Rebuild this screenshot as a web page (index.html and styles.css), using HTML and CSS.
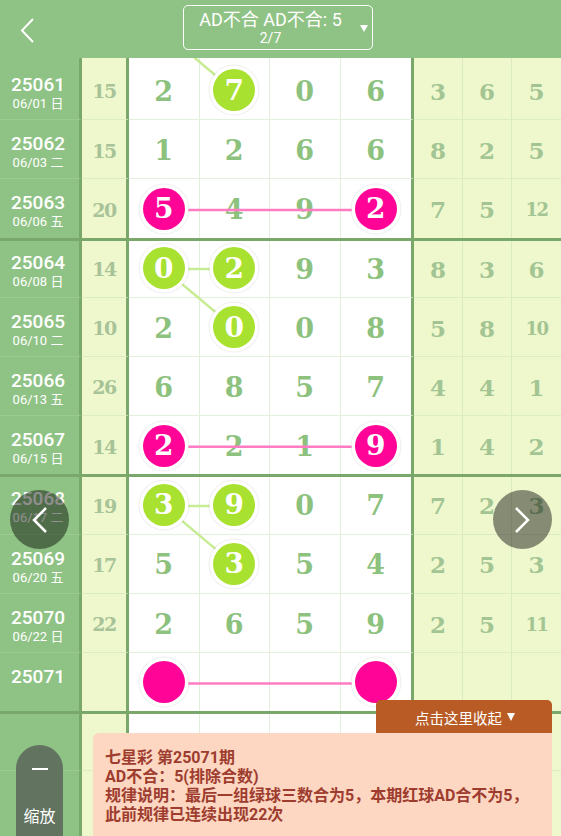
FILE: index.html
```html
<!DOCTYPE html>
<html>
<head>
<meta charset="utf-8">
<link rel="stylesheet" href="styles.css">
</head>
<body>
<div class="page">
  <div class="header">
    <svg class="back" width="16" height="26" viewBox="0 0 16 26"><polyline points="13,2 2,13.5 13,25" fill="none" stroke="#fff" stroke-width="2"/></svg>
    <div class="dropdown">
      <div class="dd-text">
        <div class="dd-title">AD不合 AD不合: 5</div>
        <div class="dd-sub">2/7</div>
      </div>
      <span class="dd-tri"></span>
    </div>
    <div></div>
  </div>

  <svg class="links" width="561" height="836" viewBox="0 0 561 836">
    <g stroke="#c7ec94" stroke-width="2.5">
      <line x1="164.25" y1="32.3" x2="234.75" y2="91.5"/>
      <line x1="164.25" y1="269.1" x2="234.75" y2="269.1"/>
      <line x1="164.25" y1="269.1" x2="234.75" y2="328.3"/>
      <line x1="164.25" y1="505.9" x2="234.75" y2="505.9"/>
      <line x1="164.25" y1="505.9" x2="234.75" y2="565.1"/>
    </g>
    <g stroke="#ff7cc3" stroke-width="2.5">
      <line x1="164.25" y1="209.9" x2="375.75" y2="209.9"/>
      <line x1="164.25" y1="446.7" x2="375.75" y2="446.7"/>
      <line x1="164.25" y1="683.5" x2="375.75" y2="683.5"/>
    </g>
  </svg>

  <div class="table">
    <div class="row first">
      <div class="c-id"><div class="id">25061</div><div class="date">06/01 日</div></div>
      <div class="c-sum">15</div>
      <div class="c-n">2</div><div class="c-n"><span class="ball g">7</span></div><div class="c-n">0</div><div class="c-n last">6</div>
      <div class="c-r">3</div><div class="c-r">6</div><div class="c-r">5</div>
    </div>
    <div class="row">
      <div class="c-id"><div class="id">25062</div><div class="date">06/03 二</div></div>
      <div class="c-sum">15</div>
      <div class="c-n">1</div><div class="c-n">2</div><div class="c-n">6</div><div class="c-n last">6</div>
      <div class="c-r">8</div><div class="c-r">2</div><div class="c-r">5</div>
    </div>
    <div class="row">
      <div class="c-id"><div class="id">25063</div><div class="date">06/06 五</div></div>
      <div class="c-sum">20</div>
      <div class="c-n"><span class="ball p">5</span></div><div class="c-n">4</div><div class="c-n">9</div><div class="c-n last"><span class="ball p">2</span></div>
      <div class="c-r">7</div><div class="c-r">5</div><div class="c-r two">12</div>
    </div>
    <div class="row grp">
      <div class="c-id"><div class="id">25064</div><div class="date">06/08 日</div></div>
      <div class="c-sum">14</div>
      <div class="c-n"><span class="ball g">0</span></div><div class="c-n"><span class="ball g">2</span></div><div class="c-n">9</div><div class="c-n last">3</div>
      <div class="c-r">8</div><div class="c-r">3</div><div class="c-r">6</div>
    </div>
    <div class="row">
      <div class="c-id"><div class="id">25065</div><div class="date">06/10 二</div></div>
      <div class="c-sum">10</div>
      <div class="c-n">2</div><div class="c-n"><span class="ball g">0</span></div><div class="c-n">0</div><div class="c-n last">8</div>
      <div class="c-r">5</div><div class="c-r">8</div><div class="c-r two">10</div>
    </div>
    <div class="row">
      <div class="c-id"><div class="id">25066</div><div class="date">06/13 五</div></div>
      <div class="c-sum">26</div>
      <div class="c-n">6</div><div class="c-n">8</div><div class="c-n">5</div><div class="c-n last">7</div>
      <div class="c-r">4</div><div class="c-r">4</div><div class="c-r">1</div>
    </div>
    <div class="row">
      <div class="c-id"><div class="id">25067</div><div class="date">06/15 日</div></div>
      <div class="c-sum">14</div>
      <div class="c-n"><span class="ball p">2</span></div><div class="c-n">2</div><div class="c-n">1</div><div class="c-n last"><span class="ball p">9</span></div>
      <div class="c-r">1</div><div class="c-r">4</div><div class="c-r">2</div>
    </div>
    <div class="row grp">
      <div class="c-id"><div class="id">25068</div><div class="date">06/17 二</div></div>
      <div class="c-sum">19</div>
      <div class="c-n"><span class="ball g">3</span></div><div class="c-n"><span class="ball g">9</span></div><div class="c-n">0</div><div class="c-n last">7</div>
      <div class="c-r">7</div><div class="c-r">2</div><div class="c-r">3</div>
    </div>
    <div class="row">
      <div class="c-id"><div class="id">25069</div><div class="date">06/20 五</div></div>
      <div class="c-sum">17</div>
      <div class="c-n">5</div><div class="c-n"><span class="ball g">3</span></div><div class="c-n">5</div><div class="c-n last">4</div>
      <div class="c-r">2</div><div class="c-r">5</div><div class="c-r">3</div>
    </div>
    <div class="row">
      <div class="c-id"><div class="id">25070</div><div class="date">06/22 日</div></div>
      <div class="c-sum">22</div>
      <div class="c-n">2</div><div class="c-n">6</div><div class="c-n">5</div><div class="c-n last">9</div>
      <div class="c-r">2</div><div class="c-r">5</div><div class="c-r two">11</div>
    </div>
    <div class="row">
      <div class="c-id"><div class="id">25071</div></div>
      <div class="c-sum"></div>
      <div class="c-n"><span class="ball p"></span></div><div class="c-n"></div><div class="c-n"></div><div class="c-n last"><span class="ball p"></span></div>
      <div class="c-r"></div><div class="c-r"></div><div class="c-r"></div>
    </div>
    <div class="row grp">
      <div class="c-id"></div><div class="c-sum"></div>
      <div class="c-n"></div><div class="c-n"></div><div class="c-n"></div><div class="c-n last"></div>
      <div class="c-r"></div><div class="c-r"></div><div class="c-r"></div>
    </div>
    <div class="row tail">
      <div class="c-id"></div><div class="c-sum"></div>
      <div class="c-n"></div><div class="c-n"></div><div class="c-n"></div><div class="c-n last"></div>
      <div class="c-r"></div><div class="c-r"></div><div class="c-r"></div>
    </div>
  </div>

  <div class="nav nav-left">
    <svg width="59" height="59" viewBox="0 0 59 59"><polyline points="36,18 24,30 36,42" fill="none" stroke="#fff" stroke-width="2.5"/></svg>
  </div>
  <div class="nav nav-right">
    <svg width="59" height="59" viewBox="0 0 59 59"><polyline points="23,18 35,30 23,42" fill="none" stroke="#fff" stroke-width="2.5"/></svg>
  </div>

  <div class="zoom-btn">
    <span class="zoom-bar"></span>
    <span class="zoom-text">缩放</span>
  </div>

  <div class="tab">点击这里收起 <span class="tab-tri"></span></div>
  <div class="popup">
    <div>七星彩 第25071期</div>
    <div>AD不合：5(排除合数)</div>
    <div>规律说明：最后一组绿球三数合为5，本期红球AD合不为5，此前规律已连续出现22次</div>
  </div>
</div>
</body>
</html>
```

FILE: styles.css
```css
* { box-sizing: border-box; }
html, body { margin: 0; padding: 0; }
body {
  width: 561px;
  height: 836px;
  overflow: hidden;
  font-family: Roboto, "Noto Sans CJK SC", sans-serif;
}
.page {
  position: relative;
  width: 561px;
  height: 836px;
  overflow: hidden;
  background: #ffffff;
}

/* header */
.header {
  position: relative;
  z-index: 3;
  height: 58px;
  background: #8fc385;
  display: grid;
  grid-template-columns: 1fr 190px 1fr;
  align-items: start;
  padding-top: 5px;
}
.back {
  margin-left: 20px;
  margin-top: 12px;
  display: block;
}
.dropdown {
  margin-left: -3px;
  width: 190px;
  height: 45px;
  border: 1.5px solid #ffffff;
  border-radius: 5px;
  display: flex;
  align-items: center;
  color: #ffffff;
}
.dd-text {
  flex: 1;
  text-align: center;
}
.dd-title {
  font-size: 18px;
  line-height: 20px;
}
.dd-sub {
  font-size: 14px;
  line-height: 16px;
}
.dd-tri {
  width: 0;
  height: 0;
  border-left: 4.5px solid transparent;
  border-right: 4.5px solid transparent;
  border-top: 7px solid #ffffff;
  margin: 2px 4px 0 2px;
}

/* link lines */
.links {
  position: absolute;
  left: 0;
  top: 0;
  z-index: 1;
  pointer-events: none;
}

/* table */
.row {
  display: grid;
  grid-template-columns: 82px 47px 70.5px 70.5px 70.5px 73.5px 49px 49px 49px;
  height: 59.2px;
}
.row.first { height: 61.2px; }
.row.grp { border-top: 3px solid #7aa86a; }
.row.tail { height: 66px; }

.row > div {
  border-top: 1px solid #e4f0df;
}
.row.first > div, .row.grp > div { border-top: none; }

.c-id {
  background: #8fc385;
  border-right: 3px solid #7aa86a;
  color: #ffffff;
  text-align: center;
  padding-top: 13px;
  padding-right: 3px;
}
.row > .c-id { border-top-color: #9ccb92; }
.row.first > .c-id { padding-top: 16px; }
.row.grp > .c-id { padding-top: 11px; }
.id {
  font-size: 19px;
  line-height: 21px;
  font-weight: 500;
}
.date {
  font-size: 13px;
  line-height: 17px;
}

.c-sum, .c-n, .c-r {
  display: flex;
  align-items: center;
  justify-content: center;
  padding-top: 2.8px;
  font-family: "DejaVu Serif", serif;
  font-weight: bold;
}
.row.first > .c-sum, .row.first > .c-n, .row.first > .c-r { padding-top: 5.8px; }
.row.grp > .c-sum, .row.grp > .c-n, .row.grp > .c-r { padding-top: 0.8px; }

.c-sum {
  background: #eff8cd;
  border-right: 3px solid #7aa86a;
  color: #a7c397;
  font-size: 19px;
  letter-spacing: -1.5px;
}
.row > .c-sum { border-top-color: #dcedc4; }
.c-n {
  background: #ffffff;
  border-right: 1px solid #e2efdc;
  color: #8cc17e;
  font-size: 27px;
}
.c-n.last { border-right: 3px solid #7aa86a; }
.c-r {
  background: #eff8cd;
  border-right: 1px solid #d9eabf;
  color: #a2c593;
  font-size: 23px;
}
.row > .c-r { border-top-color: #dcedc4; }
.c-r:last-child { border-right: none; }
.c-r.two {
  font-size: 18px;
  letter-spacing: -1.5px;
}

.ball {
  position: relative;
  z-index: 2;
  width: 42px;
  height: 42px;
  border-radius: 50%;
  box-shadow: 0 0 0 3.5px #ffffff, 0 0 1px 4.5px rgba(0, 0, 0, 0.07);
  display: flex;
  align-items: center;
  justify-content: center;
  color: #ffffff;
  font-size: 28px;
  margin-top: -2px;
}
.ball.g { background: #a8e12f; }
.ball.p { background: #ff0497; }

/* nav circles */
.nav {
  position: absolute;
  top: 490px;
  width: 59px;
  height: 59px;
  border-radius: 50%;
  background: rgba(0, 0, 0, 0.44);
  z-index: 5;
}
.nav svg { display: block; }
.nav-left { left: 10px; }
.nav-right { left: 493px; }

/* zoom button */
.zoom-btn {
  position: absolute;
  left: 16px;
  top: 745px;
  width: 47px;
  height: 100px;
  border-radius: 23.5px 23.5px 0 0;
  background: #627360;
  z-index: 4;
  display: flex;
  flex-direction: column;
  align-items: center;
  padding-top: 23px;
  color: #ffffff;
}
.zoom-bar {
  width: 16px;
  height: 2px;
  background: #ffffff;
}
.zoom-text {
  margin-top: 37px;
  font-size: 16px;
  line-height: 20px;
}

/* popup */
.tab {
  position: absolute;
  left: 376px;
  top: 700px;
  width: 176px;
  height: 34px;
  border-radius: 5px 5px 0 0;
  background: #b85b25;
  color: #ffffff;
  font-size: 14.5px;
  display: flex;
  align-items: center;
  justify-content: center;
  padding-left: 2px;
  z-index: 6;
}
.tab-tri {
  width: 0;
  height: 0;
  border-left: 4.5px solid transparent;
  border-right: 4.5px solid transparent;
  border-top: 8px solid #ffffff;
  margin-left: 5px;
}
.popup {
  position: absolute;
  left: 93px;
  top: 733px;
  width: 459px;
  height: 110px;
  border-radius: 6px 0 0 0;
  background: #fdd7c1;
  color: #9e3d2f;
  font-weight: bold;
  font-size: 16px;
  line-height: 19px;
  padding: 15px 18px 0 12px;
  z-index: 6;
}
```
